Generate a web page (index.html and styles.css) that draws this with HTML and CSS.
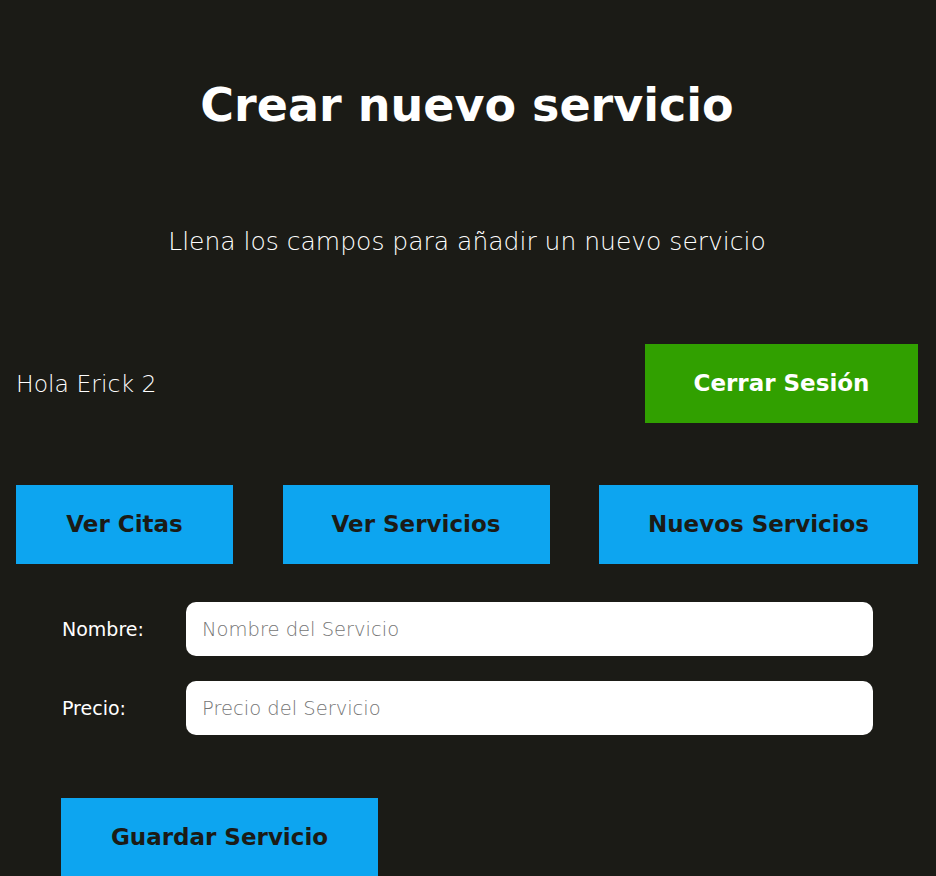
FILE: index.html
```html
<!DOCTYPE html>
<html lang="es">
<head>
<meta charset="utf-8">
<title>Crear nuevo servicio</title>
<link rel="stylesheet" href="styles.css">
</head>
<body>
<main class="page">
  <h1 class="title">Crear nuevo servicio</h1>
  <p class="subtitle">Llena los campos para añadir un nuevo servicio</p>

  <div class="session">
    <p class="greeting">Hola Erick 2</p>
    <a class="btn btn-logout" href="#">Cerrar Sesión</a>
  </div>

  <nav class="nav">
    <a class="btn btn-nav" href="#">Ver Citas</a>
    <a class="btn btn-nav" href="#">Ver Servicios</a>
    <a class="btn btn-nav" href="#">Nuevos Servicios</a>
  </nav>

  <form class="form">
    <div class="field">
      <label class="label" for="nombre">Nombre:</label>
      <input class="input" id="nombre" type="text" placeholder="Nombre del Servicio">
    </div>
    <div class="field">
      <label class="label" for="precio">Precio:</label>
      <input class="input" id="precio" type="number" placeholder="Precio del Servicio">
    </div>
    <div class="actions">
      <button class="btn btn-save" type="button">Guardar Servicio</button>
    </div>
  </form>
</main>
</body>
</html>
```
FILE: styles.css
```css
* { box-sizing: border-box; }

html, body {
  margin: 0;
  background: #1b1b16;
}

body {
  font-family: "DejaVu Sans", sans-serif;
  color: #ffffff;
  overflow: hidden;
}

.page {
  padding: 0 18px 0 16px;
}

.title {
  margin: 76px 0 0;
  font-size: 46px;
  line-height: 58px;
  font-weight: 700;
  text-align: center;
}

.subtitle {
  margin: 93px 0 0;
  font-size: 25px;
  line-height: 30px;
  font-weight: 300;
  text-align: center;
}

.session {
  margin-top: 87px;
  display: flex;
  justify-content: space-between;
  align-items: center;
}

.greeting {
  margin: 0;
  font-size: 23.5px;
  font-weight: 300;
}

.btn {
  display: block;
  border: none;
  padding: 24px 0;
  font-family: inherit;
  font-size: 23px;
  line-height: 31px;
  font-weight: 700;
  text-align: center;
  text-decoration: none;
  cursor: pointer;
}

.btn-logout {
  width: 273px;
  background: #31a000;
  color: #ffffff;
}

.nav {
  margin-top: 62px;
  display: grid;
  grid-template-columns: 217px 267px 319px;
  justify-content: space-between;
}

.btn-nav {
  background: #0da5f0;
  color: #1b1b16;
}

.form {
  margin: 38px 45px 0 46px;
  display: flex;
  flex-direction: column;
  gap: 25px;
}

.field {
  display: grid;
  grid-template-columns: 124px 1fr;
  align-items: center;
}

.label {
  font-size: 19px;
  color: #ffffff;
}

.input {
  height: 54px;
  border: none;
  border-radius: 10px;
  padding: 0 16px;
  background: #ffffff;
  font-family: inherit;
  font-size: 19.5px;
  font-weight: 300;
  color: #1b1b16;
}

.input::placeholder {
  color: #757575;
}

.actions {
  margin-top: 38px;
}

.btn-save {
  width: 317px;
  margin-left: -1px;
  background: #0da5f0;
  color: #1b1b16;
}
```
